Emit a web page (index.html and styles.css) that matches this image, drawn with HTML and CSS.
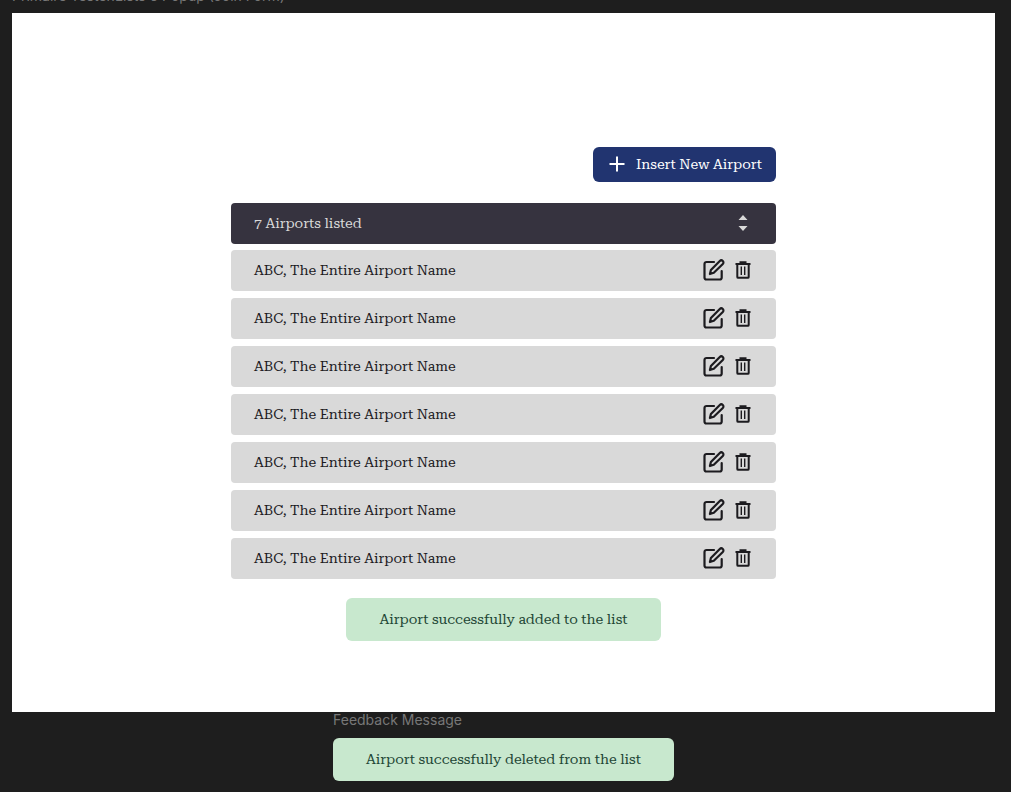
FILE: index.html
```html
<!DOCTYPE html>
<html lang="en">
<head>
<meta charset="utf-8">
<title>Airports</title>
<link rel="stylesheet" href="styles.css">
</head>
<body>
<svg class="sprite" aria-hidden="true">
  <symbol id="edit" viewBox="0 0 22 22"><path d="M11 3H3.500a2 2 0 0 0-2 2v13.500a2 2 0 0 0 2 2h13.200a2 2 0 0 0 2-2V12"/><path d="M16.800 2a2 2 0 0 1 3 3l-9 8.800-3.900 1.200 1-3.900z"/></symbol>
  <symbol id="trash" viewBox="0 0 16 18"><path d="M0.500 3h15M5.500 2.200V1.300h5v0.900M2.300 3v12.900a0.900 0.900 0 0 0 0.900 0.900h9.600a0.900 0.900 0 0 0 0.900-0.900V3"/><path class="slats" d="M6.300 5.500v8.500M9.700 5.500v8.500"/></symbol>
</svg>
<p class="caption caption-top">Primaire Tester.Lists 6 Popup (Join Form)</p>
<main class="frame">
  <section class="panel">
    <button class="insert" type="button">
      <svg class="plus" viewBox="0 0 16 16" aria-hidden="true"><path d="M8 0.500v15M0.500 8h15"/></svg>
      Insert New Airport
    </button>
    <header class="bar heading">
      <span>7 Airports listed</span>
      <button class="icon-button sort" type="button" aria-label="Sort airports"><svg viewBox="0 0 10 16" aria-hidden="true"><path d="M5 0l4.500 5h-9zM5 16l4.500-5h-9z"/></svg></button>
    </header>
    <ul class="list">
      <li class="bar"><span>ABC, The Entire Airport Name</span><span class="actions"><button class="icon-button" type="button" aria-label="Edit"><svg class="edit"><use href="#edit"/></svg></button><button class="icon-button" type="button" aria-label="Delete"><svg class="trash"><use href="#trash"/></svg></button></span></li>
      <li class="bar"><span>ABC, The Entire Airport Name</span><span class="actions"><button class="icon-button" type="button" aria-label="Edit"><svg class="edit"><use href="#edit"/></svg></button><button class="icon-button" type="button" aria-label="Delete"><svg class="trash"><use href="#trash"/></svg></button></span></li>
      <li class="bar"><span>ABC, The Entire Airport Name</span><span class="actions"><button class="icon-button" type="button" aria-label="Edit"><svg class="edit"><use href="#edit"/></svg></button><button class="icon-button" type="button" aria-label="Delete"><svg class="trash"><use href="#trash"/></svg></button></span></li>
      <li class="bar"><span>ABC, The Entire Airport Name</span><span class="actions"><button class="icon-button" type="button" aria-label="Edit"><svg class="edit"><use href="#edit"/></svg></button><button class="icon-button" type="button" aria-label="Delete"><svg class="trash"><use href="#trash"/></svg></button></span></li>
      <li class="bar"><span>ABC, The Entire Airport Name</span><span class="actions"><button class="icon-button" type="button" aria-label="Edit"><svg class="edit"><use href="#edit"/></svg></button><button class="icon-button" type="button" aria-label="Delete"><svg class="trash"><use href="#trash"/></svg></button></span></li>
      <li class="bar"><span>ABC, The Entire Airport Name</span><span class="actions"><button class="icon-button" type="button" aria-label="Edit"><svg class="edit"><use href="#edit"/></svg></button><button class="icon-button" type="button" aria-label="Delete"><svg class="trash"><use href="#trash"/></svg></button></span></li>
      <li class="bar"><span>ABC, The Entire Airport Name</span><span class="actions"><button class="icon-button" type="button" aria-label="Edit"><svg class="edit"><use href="#edit"/></svg></button><button class="icon-button" type="button" aria-label="Delete"><svg class="trash"><use href="#trash"/></svg></button></span></li>
    </ul>
    <p class="message" role="status">Airport successfully added to the list</p>
  </section>
</main>
<section class="feedback">
  <p class="caption">Feedback Message</p>
  <p class="message message-wide" role="status">Airport successfully deleted from the list</p>
</section>
</body>
</html>
```
FILE: styles.css
```css
* {
  box-sizing: border-box;
}

body {
  margin: 0;
  padding: 0 16px 0 12px;
  background: #1e1e1e;
  color: #1c1b1f;
  font: 14px/20px "Roboto Serif", "DejaVu Serif Condensed", "DejaVu Serif", serif;
  overflow: hidden;
}

p,
ul {
  margin: 0;
  padding: 0;
  list-style: none;
}

.sprite {
  display: none;
}

.caption {
  color: #777;
  font: 14px/16px Inter, sans-serif;
}

.caption-top {
  margin-top: -12px;
  margin-bottom: 9px;
}

.frame {
  padding: 134px 219px 71px;
  background: #fff;
}

.panel {
  display: flex;
  flex-direction: column;
}

.insert {
  display: flex;
  align-items: center;
  align-self: flex-end;
  gap: 11px;
  height: 35px;
  margin-bottom: 21px;
  padding: 0 14px 1px 16px;
  border: 0;
  border-radius: 6px;
  background: #213470;
  color: #fff;
  font: inherit;
}

.plus {
  width: 16px;
  height: 16px;
  stroke: #fff;
  stroke-width: 2;
}

.bar {
  display: flex;
  align-items: center;
  justify-content: space-between;
  height: 41px;
  padding: 0 25px 2px 23px;
  border-radius: 4px;
  background: #d9d9d9;
}

.heading {
  margin-bottom: 6px;
  padding-right: 28px;
  background: #36333f;
  color: #d9d9d9;
}

.list {
  display: flex;
  flex-direction: column;
  gap: 7px;
}

.actions {
  display: flex;
  align-items: center;
  gap: 10px;
}

.icon-button {
  display: flex;
  padding: 0;
  border: 0;
  background: none;
  color: inherit;
}

.edit,
.trash {
  fill: none;
  stroke: currentColor;
  stroke-width: 2;
}

.edit {
  width: 22px;
  height: 22px;
  stroke-width: 2.2;
  stroke-linejoin: round;
  stroke-linecap: round;
}

.trash {
  width: 16px;
  height: 18px;
}

.slats {
  stroke-width: 1.4;
}

.sort svg {
  width: 10px;
  height: 16px;
  fill: currentColor;
}

.message {
  align-self: center;
  margin-top: 19px;
  padding: 11px 33px;
  border-radius: 6px;
  background: #c8e8ce;
  color: #1e4635;
  line-height: 21px;
}

.feedback {
  display: flex;
  flex-direction: column;
  align-items: flex-start;
  width: max-content;
  margin: 0 auto;
}

.message-wide {
  margin-top: 10px;
}
```
